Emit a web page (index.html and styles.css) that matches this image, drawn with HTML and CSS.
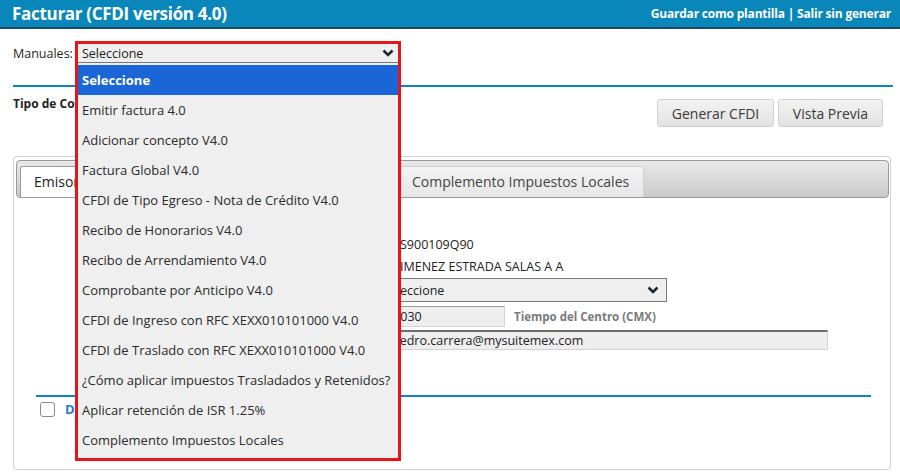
FILE: index.html
```html
<!DOCTYPE html>
<html lang="es">
<head>
  <meta charset="UTF-8">
  <meta name="viewport" content="width=device-width, initial-scale=1.0">
  <title>Facturar (CFDI versión 4.0)</title>
  <link rel="stylesheet" href="styles.css">
</head>
<body>
  <div class="topbar">
    <h1>Facturar (CFDI versión 4.0)</h1>
    <div class="top-links">
      <a href="#">Guardar como plantilla</a> | <a href="#">Salir sin generar</a>
    </div>
  </div>

  <div class="page">
    <div class="manual-row">
      <span class="manual-label">Manuales:</span>
      <div class="manual-field">
        <div class="fake-select">
          <span>Seleccione</span>
          <svg class="chevron" width="12" height="8" viewBox="0 0 12 8"><path d="M1.5 1.5 L6 6 L10.5 1.5" fill="none" stroke="#1c2733" stroke-width="2.6"/></svg>
        </div>
        <ul class="dropdown">
          <li class="selected">Seleccione</li>
          <li>Emitir factura 4.0</li>
          <li>Adicionar concepto V4.0</li>
          <li>Factura Global V4.0</li>
          <li>CFDI de Tipo Egreso - Nota de Crédito V4.0</li>
          <li>Recibo de Honorarios V4.0</li>
          <li>Recibo de Arrendamiento V4.0</li>
          <li>Comprobante por Anticipo V4.0</li>
          <li>CFDI de Ingreso con RFC XEXX010101000 V4.0</li>
          <li>CFDI de Traslado con RFC XEXX010101000 V4.0</li>
          <li>¿Cómo aplicar impuestos Trasladados y Retenidos?</li>
          <li>Aplicar retención de ISR 1.25%</li>
          <li>Complemento Impuestos Locales</li>
        </ul>
        <div class="annot"></div>
      </div>
    </div>

    <div class="rule"></div>

    <div class="toolbar">
      <div class="tipo">Tipo de Co</div>
      <div class="buttons">
        <button class="btn btn-generar">Generar CFDI</button>
        <button class="btn btn-vista">Vista Previa</button>
      </div>
    </div>

    <div class="panel">
      <div class="tabbar">
        <div class="tab active">Emisor</div>
        <div class="tab"></div>
        <div class="tab"></div>
        <div class="tab">Complemento Impuestos Locales</div>
      </div>
      <div class="tab-body">
        <div class="form">
          <div class="f-label"></div>
          <div class="f-value">S900109Q90</div>
          <div class="f-label"></div>
          <div class="f-value">IMENEZ ESTRADA SALAS A A</div>
          <div class="f-label"></div>
          <div class="f-value">
            <div class="sel-regimen">
              <span>Seleccione</span>
              <svg class="chevron" width="12" height="8" viewBox="0 0 12 8"><path d="M1.5 1.5 L6 6 L10.5 1.5" fill="none" stroke="#1c2733" stroke-width="2.6"/></svg>
            </div>
          </div>
          <div class="f-label"></div>
          <div class="f-value cp-row">
            <div class="inp inp-cp">01030</div>
            <span class="zona">Tiempo del Centro (CMX)</span>
          </div>
          <div class="f-label"></div>
          <div class="f-value">
            <div class="inp inp-mail">pedro.carrera@mysuitemex.com</div>
          </div>
          <div class="f-label"></div>
          <div class="f-value"><span class="mini-check"></span></div>
        </div>
        <div class="rule inner-rule"></div>
        <div class="extra-row">
          <span class="check"></span>
          <span class="extra-link">D</span>
        </div>
      </div>
    </div>
  </div>
</body>
</html>
```

FILE: styles.css
```css
body {
  margin: 0;
  font-family: 'Open Sans', 'DejaVu Sans', sans-serif;
  background-color: #ffffff;
  color: #222222;
  font-size: 12px;
}
.topbar {
  height: 27px;
  background-color: #0987bb;
  border-bottom: 2px solid #1b4a60;
  display: flex;
  align-items: center;
  justify-content: space-between;
  padding: 0 9px 0 12px;
}
.topbar h1 {
  margin: 0;
  font-size: 17px;
  font-weight: bold;
  color: #ffffff;
  letter-spacing: -0.3px;
}
.top-links {
  color: #ffffff;
  font-weight: bold;
  font-size: 12px;
  letter-spacing: -0.2px;
}
.top-links a {
  color: #ffffff;
  text-decoration: none;
}
.page {
  padding: 0 7px 0 13px;
}
.manual-row {
  display: flex;
  align-items: center;
  padding-top: 15px;
  height: 18px;
}
.manual-label {
  width: 65px;
  font-size: 12.5px;
  color: #1e1e1e;
}
.manual-field {
  position: relative;
  width: 320px;
  height: 18px;
}
.fake-select {
  height: 18px;
  background-color: #efefef;
  border-bottom: 1px solid #7a7a7a;
  display: flex;
  align-items: center;
  justify-content: space-between;
  padding: 0 4px 0 4px;
  font-size: 12.5px;
}
.chevron {
  display: block;
}
.dropdown {
  position: absolute;
  top: 19px;
  left: 0;
  width: 320px;
  margin: 0;
  padding: 2px 0 3px;
  list-style: none;
  background-color: #efefef;
  box-shadow: 2px 2px 3px rgba(0, 0, 0, 0.25);
  z-index: 2;
}
.dropdown li {
  height: 30px;
  line-height: 31px;
  padding-left: 4px;
  font-size: 13px;
  color: #2b2b2b;
  white-space: nowrap;
}
.dropdown li.selected {
  background-color: #1b66d6;
  color: #ffffff;
  font-weight: bold;
}
.annot {
  position: absolute;
  top: -3px;
  left: -3px;
  width: 326px;
  height: 420px;
  box-sizing: border-box;
  border: 3px solid #e3151d;
  z-index: 3;
}
.rule {
  height: 2px;
  background-color: #0a86c0;
  margin-top: 23px;
  width: 880px;
}
.toolbar {
  display: flex;
  justify-content: space-between;
  padding-top: 8px;
  height: 33px;
}
.tipo {
  font-weight: bold;
  font-size: 12px;
}
.buttons {
  display: flex;
  gap: 4px;
  padding-top: 4px;
  padding-right: 10px;
}
.btn {
  height: 28px;
  border: 1px solid #cfcfcf;
  border-radius: 3px;
  background: linear-gradient(#f3f3f3, #e2e2e2);
  font-family: 'Open Sans', sans-serif;
  font-size: 14px;
  color: #3a3a3a;
  padding: 0;
}
.btn-generar {
  width: 117px;
}
.btn-vista {
  width: 105px;
}
.panel {
  margin-top: 28px;
  width: 878px;
  border: 1px solid #d2d2d2;
  border-radius: 4px;
  padding: 3px 0 0 2px;
  box-sizing: border-box;
  height: 314px;
}
.tabbar {
  width: 873px;
  height: 38px;
  box-sizing: border-box;
  border: 1px solid #9a9a9a;
  border-radius: 4px;
  background: linear-gradient(#e9e9e9, #c9c9c9);
  display: flex;
  align-items: flex-end;
  padding-left: 3px;
  gap: 2px;
}
.tab {
  height: 31px;
  line-height: 30px;
  padding: 0 13px;
  font-size: 14px;
  color: #444444;
  background: linear-gradient(#f4f4f4, #e6e6e6);
  border: 1px solid #d0d0d0;
  border-bottom: none;
  border-radius: 3px 3px 0 0;
  box-sizing: border-box;
  white-space: nowrap;
}
.tab.active {
  background: #ffffff;
  color: #222222;
  border-color: #9a9a9a;
  width: 150px;
}
.tab:nth-child(2) {
  width: 110px;
}
.tab:nth-child(3) {
  width: 113px;
}
.tab:nth-child(4) {
  width: 245px;
  padding-left: 12px;
}
.tab-body {
  padding: 35px 0 0 20px;
}
.form {
  display: grid;
  grid-template-columns: 350px 1fr;
  align-items: center;
  font-size: 12.5px;
}
.f-label {
  height: 100%;
}
.f-value {
  min-height: 22px;
  display: flex;
  align-items: center;
  padding-left: 14px;
}
.sel-regimen {
  width: 279px;
  height: 24px;
  box-sizing: border-box;
  border: 1px solid #7a7a7a;
  background-color: #efefef;
  display: flex;
  align-items: center;
  justify-content: space-between;
  padding: 0 7px 0 3px;
  margin-left: -12px;
  margin-top: 1px;
}
.sel-regimen span {
  margin-left: -9px;
}
.cp-row {
  gap: 9px;
  padding-top: 3px;
  padding-left: 2px;
}
.inp {
  box-sizing: border-box;
  background-color: #eeeeee;
  border: 1px solid #d4d4d4;
  display: flex;
  align-items: center;
}
.inp-cp {
  width: 117px;
  height: 21px;
  border-top-color: #9a9a9a;
  border-left-color: #9a9a9a;
  padding-left: 0;
  text-indent: -3px;
}
.zona {
  color: #7a7a7a;
  font-weight: bold;
  font-size: 11.5px;
}
.inp-mail {
  width: 440px;
  height: 20px;
  border-top: 2px solid #6e6e6e;
  margin-top: 3px;
  margin-left: -12px;
  padding-left: 3px;
}
.mini-check {
  display: block;
  width: 12px;
  height: 13px;
  box-sizing: border-box;
  border: 2px solid #b4b4b4;
  border-radius: 2px;
  margin-left: -11px;
  margin-top: 2px;
}
.inner-rule {
  width: 835px;
  margin-top: 23px;
}
.extra-row {
  display: flex;
  align-items: center;
  gap: 10px;
  padding: 3px 0 0 4px;
}
.check {
  width: 13px;
  height: 13px;
  border: 1px solid #8a8a8a;
  border-radius: 3px;
}
.extra-link {
  color: #1b7fc2;
  font-weight: bold;
  font-size: 13px;
}
```
